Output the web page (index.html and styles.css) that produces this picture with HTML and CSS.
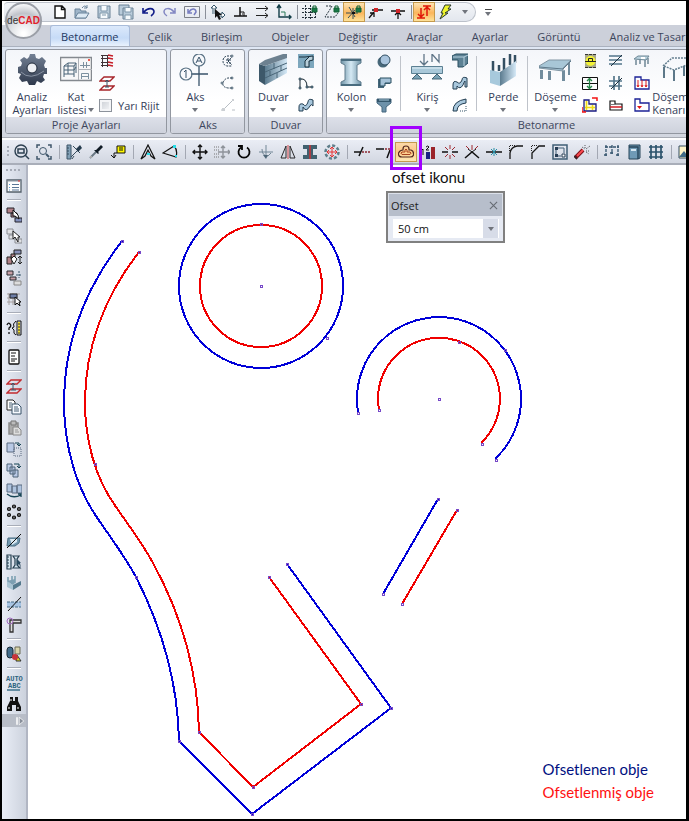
FILE: index.html
```html
<!DOCTYPE html>
<html lang="tr">
<head>
<meta charset="utf-8">
<title>ideCAD</title>
<link rel="stylesheet" href="styles.css">
</head>
<body>
<div class="app">
<header class="head">
  <button class="orb" aria-label="ideCAD"><span class="orb-i">de</span><b>CAD</b></button>
  <div class="quick">
    <div class="quick-bar">
      <button class="tool"><svg viewBox="0 0 16 16"><path d="M3 2H10L13 5V14H3ZM9.500 2V5.500H13" fill="#fff" stroke="#111" stroke-width="1.400"/></svg></button>
      <button class="tool"><svg viewBox="0 0 16 16"><path d="M1 14V5H6L7 7H12V14Z" fill="#9fb5c9" stroke="#688299"/><path d="M1 14L4 9H15L12 14Z" fill="#dce9f4" stroke="#688299"/><path d="M8 4Q11 0 13 4M13 1V4H10" stroke="#688299"/></svg></button>
      <button class="tool"><svg viewBox="0 0 16 16"><path d="M2 2H14V14H2Z" fill="#b9cbda" stroke="#6a8296"/><path d="M5 2V7H11V2M4 14V9H12V14M6 11H10" fill="#f6fafd" stroke="#7e97aa"/></svg></button>
      <button class="tool"><svg viewBox="0 0 16 16"><path d="M1 1H11V11H1Z" fill="#b9cbda" stroke="#6a8296"/><path d="M5 4H15V15H5Z" fill="#b9cbda" stroke="#6a8296"/><path d="M7 4V8H13V4M7 15V11H13V15" fill="#f6fafd" stroke="#7e97aa"/></svg></button>
      <button class="tool"><svg viewBox="0 0 16 16"><path d="M3 4V9H8M4 8C8 3 14 4 14 8Q14 10 11 12" stroke="#101c88" stroke-width="1.600"/></svg></button>
      <button class="tool"><svg viewBox="0 0 16 16"><path d="M13 4V9H8M12 8C8 3 2 4 2 8Q2 10 5 12" stroke="#8186c2" stroke-width="1.500"/></svg></button>
      <button class="tool"><svg viewBox="0 0 16 16"><path d="M.5 2.500H15.500V13.500H.5Z" stroke="#7c8088"/><path d="M4 5V9H8M5 8C8 3 12 5 12 8L10 11" stroke="#777dc0" stroke-width="1.500"/></svg></button>
      <i class="qsep"></i>
      <button class="tool"><svg viewBox="0 0 16 16"><path d="M3 10V4H1L4 1L7 4H5V10M8 12H12V14L15 11L12 8V10H9" fill="#fff" stroke="#37566a"/><path d="M5 5V14L7 12L9 16L11 15L9 11H12Z" fill="#111"/></svg></button>
      <button class="tool"><svg viewBox="0 0 16 16"><path d="M2 12H15M8 3V12" stroke="#111" stroke-width="1.500"/><path d="M8 8H12V12M10 10H11" stroke="#111"/></svg></button>
      <button class="tool"><svg viewBox="0 0 16 16"><path d="M2 4.500H14M11 2L14 4.500L11 7M2 11.500H14M11 9L14 11.500L11 14" stroke="#222"/></svg></button>
      <button class="tool"><svg viewBox="0 0 16 16"><path d="M3 2V13H15M1 4L3 1L5 4M13 11L15 13L13 15" stroke="#123d47" stroke-width="1.400"/><path d="M5 8H9V12" stroke="#287b59"/></svg></button>
      <i class="qsep"></i>
      <button class="tool"><svg viewBox="0 0 16 16"><path d="M3.500 1V15M8.500 1V15M13.500 9V15M0 4.500H9M0 8.500H15M0 13.500H15" stroke="#26333d" stroke-dasharray="2 1"/><path d="M10 4H15V8H10Z" fill="#197846" stroke="#126334"/><path d="M11 4V2H14V4" stroke="#126334"/></svg></button>
      <button class="tool"><svg viewBox="0 0 16 16"><path d="M2 2H8L5 7L1 13H11L14 9" stroke="#26333d" stroke-dasharray="2 1"/><path d="M10 4H15V8H10Z" fill="#197846" stroke="#126334"/><path d="M11 4V2H14V4" stroke="#126334"/></svg></button>
      <button class="tool lit"><svg viewBox="0 0 16 16"><path d="M0 9H12M3 3L9 13M2 14L9 6M7 4V15" stroke="#36515c"/><path d="M6 8H9V10H6Z" fill="#111"/><path d="M10 4H15V8H10Z" fill="#197846" stroke="#126334"/><path d="M11 4V2H14V4" stroke="#126334"/></svg></button>
      <button class="tool"><svg viewBox="0 0 16 16"><path d="M1 14L6 8M2 9H6V13M4 6H15" stroke="#111" stroke-width="1.300"/><path d="M6 4H10V8H6Z" fill="#d22429"/></svg></button>
      <button class="tool"><svg viewBox="0 0 16 16"><path d="M1 7H15M8 8V15M5 11L8 8L11 11" stroke="#111" stroke-width="1.300"/><path d="M6 5H10V9H6Z" fill="#d22429"/></svg></button>
      <i class="qsep"></i>
      <button class="tool lit"><svg viewBox="0 0 16 16"><path d="M5 4V13M1 14H9M2 10L5 13L8 10M11 3V12M7 2H15M8 6L11 3L14 6" stroke="#e01809" stroke-width="1.500"/></svg></button>
      <button class="tool"><svg viewBox="0 0 16 16"><path d="M7 1H13L10 5H13L7 9H10L2 15L5 9H3Z" fill="#eff42b" stroke="#26372a"/></svg></button>
      <button class="tool narrow" aria-label="Listeyi aç"><i class="tri"></i></button>
    </div>
    <button class="tool narrow more" aria-label="Özelleştir"><i class="bar"></i><i class="tri"></i></button>
  </div>
  <nav class="tabs">
    <a class="tab on" href="#">Betonarme</a><a class="tab" href="#">Çelik</a><a class="tab" href="#">Birleşim</a><a class="tab" href="#">Objeler</a><a class="tab" href="#">Değiştir</a><a class="tab" href="#">Araçlar</a><a class="tab" href="#">Ayarlar</a><a class="tab" href="#">Görüntü</a><a class="tab" href="#">Analiz ve Tasarım</a>
  </nav>
</header>

<section class="ribbon">
  <div class="group">
    <div class="group-body">
      <button class="big wide"><svg viewBox="0 0 32 32"><defs><linearGradient id="steel" x2="0" y2="1"><stop stop-color="#738094"/><stop offset="1" stop-color="#2f394c"/></linearGradient></defs><path d="M13 3L14 0H19L20 4L23 5L26 3L30 7L28 11L29 14H31V20H28L27 23L29 26L25 29L21 27L19 31H13L11 27L6 28L3 24L5 20L2 19V13L5 12L6 9L4 6L8 3L11 5Z" fill="url(#steel)"/><ellipse cx="16" cy="14" rx="5" ry="5" fill="#eef0f4" stroke="#1f2939"/><path d="M5 18Q14 27 28 17" stroke="#8993a3"/></svg><span>Analiz<br>Ayarları</span></button>
      <button class="big slim"><svg viewBox="0 0 32 32"><path d="M.5 3.500H31.500V26.500H.5Z" fill="#f7f7f8" stroke="#84898f" stroke-width="1.500"/><path d="M18.500 4V26M19 15.500H32" stroke="#aeb2b8"/><path d="M28 5H30V7H28Z" fill="#ef5c50"/><path d="M4 12L8 9H16V19M4 12H14V23M4 12V23M8 9V20M4 16H14L16 13M14 12L16 9M4 20H14" stroke="#496376"/><path d="M20 11.500H30M23.500 8V14M26.500 8V14M21.500 25V19.500H28.500V25M22 22.500H28" stroke="#7c909f"/></svg><span>Kat<br>listesi<i class="tri"></i></span></button>
      <div class="stack left">
        <button class="small"><svg viewBox="0 0 16 16"><path d="M2 2.500H13M2 5.500H13M2 9.500H13M2 12.500H13M3.500 2V14M8.500 2V14" stroke="#3f3438"/><path d="M9 2L14 3M9 5L14 6M9 9L14 10M9 12L14 13" stroke="#c61d27" stroke-width="1.500"/></svg></button>
        <button class="small"><svg viewBox="0 0 16 16"><path d="M5 2H15L11 6H1ZM5 11H15L11 15H1Z" stroke="#a6242a" stroke-width="1.300"/><path d="M8 5V12M6 7L8 5L10 7M6 12H10" stroke="#385569"/></svg></button>
        <label class="check"><input type="checkbox">Yarı Rijit</label>
      </div>
    </div>
    <h2>Proje Ayarları</h2>
  </div>

  <div class="group">
    <div class="group-body">
      <button class="big"><svg viewBox="0 0 32 32"><path d="M20 12V32M12 20H29" stroke="#38536a" stroke-width="1.300"/><circle cx="20" cy="6" r="6" stroke="#5b7386" stroke-width="1.200"/><circle cx="7" cy="20" r="6" stroke="#5b7386" stroke-width="1.200"/><path d="M17 9L20 3L23 9M18 7H22M5 18L7 16V24" stroke="#38536a"/></svg><span>Aks<i class="tri under"></i></span></button>
      <div class="stack">
        <button class="small"><svg viewBox="0 0 16 16"><path d="M12 3H7Q3 4 3 8T7 13H12M8 8L12 4M8 8L12 12M7 6H10V10H7Z" stroke="#263d50" stroke-dasharray="2 1"/><circle cx="12" cy="3" r="1" fill="#fff" stroke="#496172"/></svg></button>
        <button class="small"><svg viewBox="0 0 16 16"><path d="M12 3H8Q4 4 3 8T8 13H12" stroke="#263d50" stroke-dasharray="2 1"/><circle cx="12" cy="3" r="1" stroke="#496172"/><circle cx="2" cy="8" r="1" stroke="#496172"/><circle cx="12" cy="13" r="1" stroke="#496172"/></svg></button>
        <button class="small"><svg viewBox="0 0 16 16"><path d="M3 13L13 3M1 13H4M12 13H15" stroke="#b8bec4"/><path d="M2 11H5V14H2ZM12 2H14V4H12Z" fill="#ccd0d4"/></svg></button>
      </div>
    </div>
    <h2>Aks</h2>
  </div>

  <div class="group">
    <div class="group-body">
      <button class="big"><svg viewBox="0 0 32 32"><defs><linearGradient id="glass" x2="1"><stop stop-color="#5b7b8f"/><stop offset="1" stop-color="#d5e9f7"/></linearGradient></defs><path d="M2 10L8 12V31L2 27Z" fill="#3d586a"/><path d="M8 12L30 4V19L8 31Z" fill="url(#glass)"/><path d="M2 10L8 6L26 0H30V4L8 12Z" fill="#6d8190"/><path d="M8 18L30 9M8 24L30 14M17 9V15M24 12V17M13 17V22M20 19V24" stroke="#496577"/></svg><span>Duvar<i class="tri under"></i></span></button>
      <div class="stack">
        <button class="small"><svg viewBox="0 0 16 16"><path d="M0 1H16V15H0Z" fill="#7da7bd"/><path d="M1 4H7L15 3V7L11 8V14H7V8L11 4" fill="#b7ced9" stroke="#172e3c"/></svg></button>
        <button class="small"><svg viewBox="0 0 16 16"><path d="M2 13V4Q9 3 9 12H15" stroke="#16252f"/><path d="M1 12H3V14H1ZM1 3H3V5H1ZM8 11H10V13H8ZM13 11H15V13H13Z" fill="#6d8c9f" stroke="#273d4c" stroke-width=".6"/></svg></button>
        <button class="small"><svg viewBox="0 0 16 16"><path d="M1 10Q1 6 5 7Q8 11 10 5Q10 1 15 3V9Q13 6 12 9Q8 16 5 10V14H1Z" fill="#a8c7dc" stroke="#233e52"/></svg></button>
      </div>
    </div>
    <h2>Duvar</h2>
  </div>

  <div class="group last">
    <div class="group-body">
      <button class="big"><svg viewBox="0 0 32 32"><defs><linearGradient id="pillar" x2="1"><stop stop-color="#6f93a6"/><stop offset=".5" stop-color="#d5e9f4"/><stop offset="1" stop-color="#6f93a6"/></linearGradient></defs><path d="M6 5H26V9L22 11V26L26 28V32H6V28L10 26V11L6 9Z" fill="url(#pillar)" stroke="#607d8e"/><path d="M6 5H26V7H6ZM6 30H26V32H6Z" fill="#496c7f"/></svg><span>Kolon<i class="tri under"></i></span></button>
      <div class="stack">
        <button class="small"><svg viewBox="0 0 16 16"><circle cx="7" cy="9" r="5.500" fill="#48687a"/><circle cx="9" cy="7" r="5" fill="#a9c4dd" stroke="#314e61"/></svg></button>
        <button class="small"><svg viewBox="0 0 16 16"><path d="M2 4H14V9H8V13H2Z" fill="#45677b"/><path d="M4 3H15V8H9V11H4Z" fill="#a5c2d8" stroke="#294e61"/></svg></button>
        <button class="small"><svg viewBox="0 0 16 16"><path d="M1 2H15V6L10 10V15H6V10L1 6Z" fill="#6d91a9" stroke="#45677e"/><path d="M1 2H15V5H1Z" fill="#34566b"/><path d="M3 3H13" stroke="#a7c8db"/></svg></button>
      </div>
      <i class="gsep"></i>
      <button class="big"><svg viewBox="0 0 32 32"><path d="M.5 12.500H31.500V19.500H.5Z" fill="#a9c8d9" stroke="#5c8093"/><path d="M1 14H31" stroke="#e4f1f7"/><path d="M6 20L11 25H1ZM26 20L31 25H21Z" fill="#79a2b5" stroke="#446576"/><path d="M13 0V11M9 7L13 11L17 7M21 8V0L28 8V0" stroke="#607688" stroke-width="1.300"/></svg><span>Kiriş<i class="tri under"></i></span></button>
      <div class="stack">
        <button class="small"><svg viewBox="0 0 16 16"><path d="M0 3L4 1H16V10L11 14H6V7H0Z" fill="#5c8194" stroke="#294e61"/><path d="M1 4H12V13M12 4L16 2" stroke="#b7d1df"/></svg></button>
        <button class="small"><svg viewBox="0 0 16 16"><path d="M1 10Q1 5 5 7Q8 10 10 5Q10 1 15 3V12L13 12V6Q12 7 11 10Q8 15 5 11V14H1Z" fill="#a8c7dc" stroke="#233e52"/></svg></button>
        <button class="small"><svg viewBox="0 0 16 16"><path d="M1 14Q1 4 14 2V6Q5 7 5 14Z" fill="#a8c7dc" stroke="#233e52"/><path d="M8 14H14V8" stroke="#38566a" stroke-dasharray="1 1"/></svg></button>
      </div>
      <i class="gsep"></i>
      <button class="big"><svg viewBox="0 0 32 32"><path d="M6 18V7M12 17V11M17 16V4M23 11V0M28 9V1" stroke="#344f62" stroke-width="2.500"/><path d="M13 18L29 7V22L13 32Z" fill="url(#glass)"/><path d="M3 16L13 18V32L3 29Z" fill="#a7c9dc"/></svg><span>Perde<i class="tri under"></i></span></button>
      <i class="gsep near"></i>
      <button class="big wide"><svg viewBox="0 0 32 32"><path d="M1 16V25H4V16M23 17V27H26V16M29 10V21H31V7M9 17V26H12V17" fill="#718c9d"/><path d="M0 12L10 6H32L24 14V17L0 14Z" fill="#a8c7d7" stroke="#8095a3"/><path d="M0 13L24 15L32 7" stroke="#5e798a"/></svg><span>Döşeme<i class="tri under"></i></span></button>
      <div class="stack">
        <button class="small"><svg viewBox="0 0 16 16"><path d="M3 1H14V15H3Z" fill="#a9a98a"/><circle cx="8.500" cy="8" r="5" fill="#f3f336"/><path d="M3 8.500H14M6.500 8V5.500H10.500V8" stroke="#222"/><path d="M3 1.500H14M3 14.500H14" stroke="#343434" stroke-dasharray="3 1"/></svg></button>
        <button class="small"><svg viewBox="0 0 16 16"><path d="M.5 2.500H15.500V14.500H.5ZM1 8.500H15" stroke="#111"/><path d="M7.500 4V13M5 6L7.500 3.500L10 6M5 11L7.500 13.500L10 11" stroke="#248546" stroke-width="1.300"/></svg></button>
        <button class="small"><svg viewBox="0 0 16 16"><path d="M2 3H7V7H14V14H2Z" fill="#fffce0" stroke="#181b83" stroke-width="1.300"/><path d="M4.500 4V13M10.500 8V13M3 10.500H13" stroke="#eddc15" stroke-width="1.500"/><path d="M10 1H15V4M0 10V15H4" stroke="#f31313" stroke-width="1.500"/></svg></button>
      </div>
      <div class="stack spaced">
        <button class="small"><svg viewBox="0 0 16 16"><path d="M1 3H14M1 7H14M1 11H14" stroke="#53758a" stroke-width="1.700"/><path d="M3 13L14 2" stroke="#1b303f"/></svg></button>
        <button class="small"><svg viewBox="0 0 16 16"><path d="M1 6H14M1 11H14M6 1V15M11 1V15" stroke="#53758a" stroke-width="1.700"/><path d="M3 14L14 3" stroke="#1b303f"/></svg></button>
        <button class="small"><svg viewBox="0 0 16 16"><path d="M2 4H7V7H14V13H2Z" stroke="#111" stroke-width="1.200"/><path d="M2 10H14" stroke="#d31c25" stroke-width="1.500"/><path d="M2 7.500H8" stroke="#777"/></svg></button>
      </div>
      <div class="stack spaced">
        <button class="small"><svg viewBox="0 0 16 16"><path d="M0 6L4 3H15L12 7Z" fill="#b9d1dd" stroke="#6c8796"/><path d="M2 7V12M11 7V14M14 5V11M6 7V11" stroke="#6f8796" stroke-width="1.500"/><path d="M7 4H11V6H7Z" fill="#fff"/></svg></button>
        <button class="small"><svg viewBox="0 0 16 16"><path d="M1 2H7V5H15V14H1Z" stroke="#1c2296" stroke-width="1.300"/><path d="M4 5V12M8 5V12M12 5V12M3 10L4 12L5 10M7 10L8 12L9 10M11 10L12 12L13 10" stroke="#df1e20"/></svg></button>
        <button class="small"><svg viewBox="0 0 16 16"><path d="M1 2H6V6H15V14H1Z" stroke="#1c2296" stroke-width="1.300"/><path d="M3 9H8L5.500 12Z" fill="#e11313"/></svg></button>
      </div>
      <button class="big"><svg viewBox="0 0 32 32"><path d="M6 12L15 4H32M7 12L17 16L32 10" stroke="#647f90" stroke-width="1.500" stroke-dasharray="2 1"/><path d="M7 13V24M17 16V27M27 12V22" stroke="#5d7889" stroke-width="2"/></svg><span class="from-left">Döşeme<br>Kenarı</span></button>
    </div>
    <h2>Betonarme</h2>
  </div>
</section>

<div class="toolbar">
  <i class="grip"></i>
  <button class="tool"><svg viewBox="0 0 16 16"><circle cx="7" cy="7" r="6" stroke="#2d4051" stroke-width="1.400"/><path d="M4 5H10V9H4ZM11 11L15 15" stroke="#2d4051" stroke-width="1.500"/></svg></button>
  <button class="tool"><svg viewBox="0 0 16 16"><path d="M1 4V1H4M12 1H15V4M15 12V15H12M4 15H1V12" stroke="#40576b" stroke-width="1.500"/><circle cx="7" cy="7" r="3.500" stroke="#40576b"/><path d="M10 10L13 13" stroke="#40576b" stroke-width="2"/></svg></button>
  <i class="sep"></i>
  <button class="tool"><svg viewBox="0 0 16 16"><path d="M1 1H5V15H1Z" fill="#81a0b6" stroke="#3d5569"/><path d="M1 4H3M1 7H3M1 10H3M5 13L11 7M7 2L14 9M6 15L8 12" stroke="#374c5e"/><path d="M10 5L14 1L16 4L12 8Z" fill="#243a4d"/></svg></button>
  <button class="tool"><svg viewBox="0 0 16 16"><path d="M2 14L9 7" stroke="#697883" stroke-width="2"/><path d="M8 6L13 1L15 3L10 8L11 9L10 10L6 6Z" fill="#111b25"/><path d="M2 12H4V14H2Z" fill="#aaa"/></svg></button>
  <button class="tool"><svg viewBox="0 0 16 16"><path d="M7 2H15V9H7Z" fill="#fff800" stroke="#111"/><path d="M9 4H13M9 6H13M7 9H4V14M1 11L4 14L6 11" stroke="#111"/></svg></button>
  <i class="sep"></i>
  <button class="tool"><svg viewBox="0 0 16 16"><path d="M8 1L1 15L5 12L8 6L11 12L15 15Z" stroke="#111" stroke-width="1.200"/><path d="M7 9H10V11H7Z" fill="#25dbe7"/></svg></button>
  <button class="tool"><svg viewBox="0 0 16 16"><path d="M1 9L12 2Q16 6 14 13Z" stroke="#111" stroke-width="1.200"/><path d="M11 1H14V4H11ZM13 11H15V13H13Z" fill="#25dbe7"/></svg></button>
  <i class="sep"></i>
  <button class="tool"><svg viewBox="0 0 16 16"><path d="M8 1V15M1 8H15M6 3L8 1L10 3M6 13L8 15L10 13M3 6L1 8L3 10M13 6L15 8L13 10" stroke="#111" stroke-width="1.400"/></svg></button>
  <button class="tool"><svg viewBox="0 0 16 16"><path d="M9 2V14M4 8H16M7 4L9 2L11 4M7 12L9 14L11 12M14 6L16 8L14 10" stroke="#8e939a" stroke-width="1.400"/><path d="M0 3H6M0 6H5M0 10H5M0 13H6" stroke="#777" stroke-dasharray="1 1"/></svg></button>
  <button class="tool"><svg viewBox="0 0 16 16"><path d="M11 3.500A5.500 5.500 0 1 1 5 3.500M2 2H6V6" stroke="#050505" stroke-width="1.800"/></svg></button>
  <button class="tool"><svg viewBox="0 0 16 16"><path d="M1 8H15M8 1V13M4 5Q4 12 10 12L13 9" stroke="#738796"/><path d="M5 11L8 15L10 11Z" fill="#4f6778"/></svg></button>
  <button class="tool"><svg viewBox="0 0 16 16"><path d="M1 14L6 2V14ZM15 14L10 2V14Z" stroke="#29282b"/><path d="M8 1V15" stroke="#d44548"/></svg></button>
  <button class="tool"><svg viewBox="0 0 16 16"><path d="M1 1H15V5H11V11H15V15H1V11H5V5H1Z" fill="#41616f"/><path d="M8 1V15" stroke="#ef2525" stroke-width="1.200"/></svg></button>
  <button class="tool"><svg viewBox="0 0 16 16"><circle cx="8" cy="8" r="6.500" stroke="#5f7f8b" stroke-width="2.500" stroke-dasharray="3 2"/><path d="M8 3V13M3 8H13M6 5L8 3L10 5M6 11L8 13L10 11M5 6L3 8L5 10M11 6L13 8L11 10" stroke="#e63434"/></svg></button>
  <i class="sep"></i>
  <button class="tool"><svg viewBox="0 0 16 16"><path d="M0 8H7M5 12L9 3" stroke="#111" stroke-width="1.500"/><path d="M8 8H16" stroke="#8b2932" stroke-dasharray="2 1" stroke-width="1.500"/></svg></button>
  <button class="tool"><svg viewBox="0 0 16 16"><path d="M0 5H8M11 14L14 6" stroke="#111" stroke-width="1.500"/><path d="M9 5H15" stroke="#8b2932" stroke-dasharray="2 1" stroke-width="1.500"/></svg></button>
  <button class="tool lit marked" aria-label="Ofset"><svg viewBox="0 0 16 16"><path d="M5 6V5Q5 2 8 2T11 5V6H13Q16 7 15.500 11Q15 13 12 13H4Q0 13 .5 9Q2 6 5 6Z" stroke="#542a20" stroke-width="1.200"/><path d="M7 8V6Q8 4 9 6V8H12Q14 9 12 10.500H4Q2 9 4 8Z" stroke="#a84220"/></svg></button>
  <button class="tool"><svg viewBox="0 0 16 16"><path d="M6 8H10V15H6Z" fill="#192282"/><path d="M11 3H15V15H11Z" fill="#9b242a"/><path d="M2 6L3 5V11M6 3Q8 1 9 3L6 6H9" stroke="#111"/></svg></button>
  <button class="tool"><svg viewBox="0 0 16 16"><path d="M0 8H6M10 8H16" stroke="#111" stroke-width="1.600"/><path d="M8 1V5M8 11V15M3 3L6 6M13 3L10 6M3 13L6 10M13 13L10 10" stroke="#a22a31"/></svg></button>
  <button class="tool"><svg viewBox="0 0 16 16"><path d="M1 14L8 8L15 14" stroke="#111" stroke-width="1.500"/><path d="M4 5L8 8L12 5" stroke="#111"/><path d="M8 1V6M2 2L5 5M14 2L11 5" stroke="#a22a31"/></svg></button>
  <button class="tool"><svg viewBox="0 0 16 16"><path d="M0 8H16" stroke="#111" stroke-width="1.500"/><path d="M5 5L11 11M11 5L5 11M8 4V12" stroke="#268ea5"/></svg></button>
  <button class="tool"><svg viewBox="0 0 16 16"><path d="M2 15V9Q3 3 9 2H15" stroke="#151515" stroke-width="1.300"/><path d="M1.500 7V1.500H8" stroke="#222" stroke-dasharray="1 1"/></svg></button>
  <button class="tool"><svg viewBox="0 0 16 16"><path d="M2 15V9L9 2H15" stroke="#151515" stroke-width="1.300"/><path d="M1.500 7V1.500H8" stroke="#222" stroke-dasharray="1 1"/></svg></button>
  <button class="tool"><svg viewBox="0 0 16 16"><path d="M1 1H15V15H1Z" stroke="#405f76" stroke-width="1.500"/><path d="M4 4H12V9M4 4V12H9" stroke="#405f76"/><path d="M3 3H6V6H3ZM3 10H6V13H3Z" fill="#283e55"/><path d="M10 10H13V13H10Z" fill="#fff" stroke="#283e55"/></svg></button>
  <button class="tool"><svg viewBox="0 0 16 16"><path d="M1 14L9 6" stroke="#7a1118" stroke-width="4"/><path d="M3 12L9 6" stroke="#fb4a50" stroke-width="2"/><path d="M0 12L3 15" stroke="#29272a" stroke-width="1.500"/><path d="M11 1V4M8 3L11 5M12 5L16 2M12 7H16M12 8L15 10" stroke="#55575a" stroke-dasharray="1 1"/></svg></button>
  <i class="sep"></i>
  <button class="tool"><svg viewBox="0 0 16 16"><path d="M1 3H15M2 1V12M8 1V7M14 1V12M0 11H4M12 11H16M6 9H10M8 7V11" stroke="#36566f" stroke-width="1.300" stroke-dasharray="3 1"/></svg></button>
  <button class="tool"><svg viewBox="0 0 16 16"><path d="M3 1H14V14L12 15H3Z" fill="#6f9ab6" stroke="#264459"/><path d="M3 3H12V15" stroke="#264459" stroke-width="1.400"/><path d="M5 5H10V7H5Z" fill="#d7e8f3"/></svg></button>
  <button class="tool"><svg viewBox="0 0 16 16"><path d="M3 1V15M8 1V15M13 1V15M1 3H15M1 8H15M1 13H15" stroke="#2c536c" stroke-width="1.700"/></svg></button>
  <i class="sep"></i>
  <button class="tool"><svg viewBox="0 0 16 16"><path d="M1 2H15V14H1Z" fill="#fff4c7" stroke="#344f62"/><path d="M1 13L6 7L11 13Z" fill="#3f6a86"/></svg></button>
</div>

<main class="work">
  <aside class="side">
    <i class="grip flat"></i>
    <button class="tool"><svg viewBox="0 0 16 16"><path d="M1 2H15V14H1Z" fill="#fff" stroke="#54606b" stroke-width="1.300"/><path d="M1 3H15" stroke="#8995a1"/><path d="M6 6.500H13M6 9.500H13M6 12H13" stroke="#5a7797"/><path d="M3 6.500H4M3 9.500H4M3 12H4" stroke="#5a9ad7"/><path d="M12 3H14" stroke="#e33"/></svg></button>
    <i class="sep"></i>
    <button class="tool"><svg viewBox="0 0 16 16"><path d="M1 1H8V6H1ZM5 6H11V10H5Z" fill="#b18086" stroke="#26252c"/><path d="M9 11H16V15H9Z" fill="#8290bd" stroke="#26252c"/><path d="M7 3L12 8L13 12L9 9H7Z" fill="#fff" stroke="#111"/></svg></button>
    <button class="tool"><svg viewBox="0 0 16 16"><path d="M1 1H7V6H1ZM3 7H9V11H3ZM9 11H16V15H9Z" fill="#e0e1e4" stroke="#898c92"/><path d="M7 3V11L9 9L12 14V9H14Z" fill="#fff" stroke="#222"/></svg></button>
    <button class="tool"><svg viewBox="0 0 16 16"><path d="M8 1H15V5H8Z" fill="#8891ba" stroke="#222"/><path d="M1 8H6V15H1ZM5 5H9V10H5Z" fill="#b18086" stroke="#222"/><path d="M8 7L11 10L8 15L5 10Z" fill="#fff" stroke="#222"/><path d="M14 7V15M12 9L14 7L16 9M12 13L14 15L16 13" stroke="#222"/></svg></button>
    <button class="tool"><svg viewBox="0 0 16 16"><path d="M1 1H7V5H1ZM4 7H10V10H4Z" fill="#c69fa5" stroke="#292b30"/><path d="M8 11H15V15H8Z" fill="#ddd" stroke="#888"/><path d="M13 1V8M10 5H16" stroke="#37566a" stroke-dasharray="2 1"/></svg></button>
    <button class="tool"><svg viewBox="0 0 16 16"><path d="M1 3H14M1 7H12M1 11H12M3 2V14M7 2V14M11 2V14" stroke="#a59f9e"/><path d="M4 3H11V7H4Z" fill="#6d7da6" stroke="#25272b"/><path d="M9 6V14L11 12L14 15L13 11H15Z" fill="#fff" stroke="#111"/></svg></button>
    <i class="sep"></i>
    <button class="tool"><svg viewBox="0 0 16 16"><path d="M1 5Q2 2 4 4Q6 6 3 8V10M3 12V14" stroke="#111" stroke-width="1.300"/><path d="M10 1Q6 4 8 7L6 8L8 10Q7 14 10 15M11 1H15V15H11Z" stroke="#111"/><path d="M12 2H14V14H12Z" fill="#f4de31"/><path d="M12 4H14M12 7H14M12 10H14M12 13H14" stroke="#333"/></svg></button>
    <i class="sep"></i>
    <button class="tool"><svg viewBox="0 0 16 16"><rect x="3" y="1" width="10" height="14" rx="1" fill="#fff" stroke="#111" stroke-width="1.300"/><path d="M5 4H10M5 7H9M5 10H11M5 12H9" stroke="#111"/></svg></button>
    <i class="sep"></i>
    <button class="tool"><svg viewBox="0 0 16 16"><path d="M5 2H15L11 6H1ZM5 11H15L11 15H1Z" stroke="#c22b2f" stroke-width="1.300"/><path d="M7 5V12M5 7L7 5L9 7M5 12H10" stroke="#385569"/></svg></button>
    <button class="tool"><svg viewBox="0 0 16 16"><path d="M1 1H7L9 3V11H1Z" fill="#fff" stroke="#222"/><path d="M6 5H12L15 8V15H6Z" fill="#f7faff" stroke="#385269"/><path d="M3 4H6M3 6H5M3 8H5M8 8H12M8 10H13M8 12H13" stroke="#486175"/></svg></button>
    <button class="tool"><svg viewBox="0 0 16 16"><path d="M3 3H12V14H3Z" fill="#aaa" stroke="#8b8b8b" stroke-width="1.500"/><path d="M5 1H10V5H5Z" fill="#bbb" stroke="#777"/><path d="M7 7H12L15 10V15H7Z" fill="#ddd" stroke="#888"/><path d="M9 10H12M9 12H13" stroke="#999"/></svg></button>
    <button class="tool"><svg viewBox="0 0 16 16"><path d="M1 2H8V11H1Z" fill="#b9c9e5" stroke="#5a6b80"/><path d="M8 7H15V15H8Z" stroke="#5a6b80" stroke-dasharray="1 1"/><path d="M9 2H13V5M11 3L13 5L15 3" stroke="#174455"/></svg></button>
    <button class="tool"><svg viewBox="0 0 16 16"><path d="M1 2H6V9H1ZM4 5H9V12H4ZM7 8H12V15H7Z" fill="#b9c9e5" stroke="#4d6276"/><path d="M8 2H13V6M11 4L13 6L15 4" stroke="#174455"/></svg></button>
    <button class="tool"><svg viewBox="0 0 16 16"><path d="M1 1H6V9H1ZM6 3H11V10H6ZM11 2H16V10H11Z" fill="#afc4df" stroke="#5a6b80"/><path d="M1 11Q7 16 15 12M12 11H15V14" stroke="#174455" stroke-width="1.300"/></svg></button>
    <button class="tool"><svg viewBox="0 0 16 16"><g fill="#777" stroke="#111" stroke-width="1.200"><circle cx="8" cy="2.500" r="1.500"/><circle cx="3" cy="5" r="1.500"/><circle cx="13" cy="5" r="1.500"/><circle cx="3" cy="11" r="1.500"/><circle cx="13" cy="11" r="1.500"/><circle cx="8" cy="13.500" r="1.500"/></g></svg></button>
    <i class="sep"></i>
    <button class="tool"><svg viewBox="0 0 16 16"><path d="M2 5H14L13 10L9 13H1Z" fill="#7298b0" stroke="#486c81"/><path d="M4 6H11V9L6 12" fill="#d8e8f2"/><path d="M1 15L15 1" stroke="#111"/></svg></button>
    <button class="tool"><svg viewBox="0 0 16 16"><path d="M1 1H5V15H1ZM7 2H13L11 5V11L14 14H7L9 11V5Z" fill="#d4e5ef" stroke="#263f50" stroke-width="1.200"/><path d="M1 3H3M1 6H3M1 9H3M1 12H3" stroke="#263f50"/><path d="M11 5V12L13 10L15 14L14 9H15Z" fill="#2b4b60"/></svg></button>
    <button class="tool"><svg viewBox="0 0 16 16"><path d="M2 2V9M6 1V9M9 1V8" stroke="#8fadbd" stroke-width="2"/><path d="M1 6L7 10V15L1 12Z" fill="#a9c4d3"/><path d="M7 10L15 6V10L7 15Z" fill="#54798d"/><path d="M1 6L9 4V8L7 10Z" fill="#7c9fb2"/></svg></button>
    <button class="tool"><svg viewBox="0 0 16 16"><path d="M1 6H15V11H1Z" fill="#a8c4e3"/><path d="M1 6H15M1 11H15" stroke="#476d87" stroke-dasharray="3 1"/><path d="M2 15L15 1" stroke="#111"/></svg></button>
    <button class="tool"><svg viewBox="0 0 16 16"><path d="M4 3H15V6H7V15H4Z" fill="#dedede" stroke="#333" stroke-width="1.300"/><circle cx="4" cy="4" r="3" stroke="#a36cc2"/></svg></button>
    <i class="sep"></i>
    <button class="tool"><svg viewBox="0 0 16 16"><rect x="1" y="1" width="6" height="11" rx="3" fill="#436d8c" stroke="#1b2d39"/><path d="M9 1H14V8H9Z" fill="#d8d4aa" stroke="#6b6a55"/><path d="M11 9L15 15H10Z" fill="#ddcf22" stroke="#333"/><circle cx="9" cy="11" r="3" fill="#c7343a"/></svg></button>
    <i class="sep"></i>
    <button class="tool"><svg viewBox="0 0 16 16" class="words"><text x="0" y="6">AUTO</text><text x="2" y="13">ABC</text><path d="M1 15H14" stroke="#3d718b" stroke-width="1.500"/></svg></button>
    <button class="tool"><svg viewBox="0 0 16 16"><path d="M4 1H7V5H9V1H12V5L15 11V15H10V9H6V15H1V11L4 5Z" fill="#111"/><path d="M3 11V13M12 11V13M5 3V5" stroke="#fff"/></svg></button>
    <button class="side-more" aria-label="Diğer"><svg viewBox="0 0 16 16"><path d="M4 3V13" stroke="#fff" stroke-width="2"/><path d="M7 3L13 8L7 13Z" fill="#888f9a" stroke="#fff"/></svg></button>
  </aside>
  <section class="canvas">
    <svg class="drawing" viewBox="28 165 658 654" preserveAspectRatio="xMinYMin meet">
      <g class="blue">
        <circle cx="261" cy="286" r="82"/>
        <path d="M358 412A82 82 0 1 1 495 459"/>
        <path d="M438 499L383 594"/>
        <path d="M122 241C84 290 64 345 64 402C64 448 77 489 98 519C113 541 124 555 136 577C162 628 178 684 179 741L252 814L391 708L287 564"/>
      </g>
      <g class="red">
        <circle cx="261" cy="286" r="61"/>
        <path d="M379 410A61 61 0 1 1 481 443"/>
        <path d="M457 510L402 604"/>
        <path d="M139 252C103 298 85 350 85 402C85 440 95 478 116 507C129 526 141 541 153 563C182 616 198 673 199 732L253 787L361 704L269 577"/>
      </g>
      <g class="nodes">
        <path d="M260 285h2v2h-2zM438 398h2v2h-2zM260 223h2v2h-2zM326 337h2v2h-2zM458 341h2v2h-2zM504 349h2v2h-2zM357 412h2v2h-2zM378 409h2v2h-2zM495 459h2v2h-2zM481 443h2v2h-2zM437 498h2v2h-2zM382 593h2v2h-2zM456 509h2v2h-2zM401 603h2v2h-2zM121 240h2v2h-2zM138 251h2v2h-2zM94 463h2v2h-2zM135 576h2v2h-2zM178 740h2v2h-2zM198 731h2v2h-2zM251 813h2v2h-2zM252 786h2v2h-2zM390 707h2v2h-2zM360 703h2v2h-2zM286 563h2v2h-2zM268 576h2v2h-2z"/>
      </g>
    </svg>
    <p class="note">ofset ikonu</p>
    <form class="panel">
      <div class="panel-head"><label for="dist">Ofset</label><button type="button" aria-label="Kapat"><svg viewBox="0 0 10 10"><path d="M1 1L9 9M9 1L1 9" stroke="#666b73" stroke-width="1.200"/></svg></button></div>
      <div class="panel-body"><select id="dist"><option>50 cm</option></select><span class="drop"><i class="tri"></i></span></div>
    </form>
    <div class="legend"><p class="src">Ofsetlenen obje</p><p class="res">Ofsetlenmiş obje</p></div>
  </section>
</main>
</div>
</body>
</html>
```
FILE: styles.css
```css
*, *::after { box-sizing: border-box; }
body { margin: 0; font-family: "Open Sans", "Noto Sans", sans-serif; font-size: 11px; color: #333d58; }
button { padding: 0; border: 0; background: none; font: inherit; color: inherit; }
svg { fill: none; display: block; }
i { flex: none; }

.app { display: flex; flex-direction: column; min-height: 100vh; overflow: hidden; border: solid #000; border-width: 1px 3px 2px 2px; background: #d3d7e0; }

.head { position: relative; background: #fff; }
.quick { display: flex; height: 24px; padding: 1px 0 3px 2px; background: #fff; }
.quick-bar { display: flex; align-items: center; height: 20px; padding: 0 2px 0 45px; border: 1px solid #bcc1ca; border-left: 0; border-radius: 4px 10px 10px 0; background: linear-gradient(#f3f5f8, #e3e7ee); }
.tool { display: flex; flex: none; align-items: center; justify-content: center; width: 22px; height: 20px; }
.tool svg { width: 16px; height: 16px; flex: none; }
.tool.lit { border: 1px solid #c59a4d; background: linear-gradient(#fde3b4, #fbb65c 55%, #fde29a); }
.toolbar .lit { background: linear-gradient(#fbd9a8, #fcc987 50%, #fdeab8); }
.narrow { width: 16px; }
.more { flex-direction: column; gap: 2px; margin-left: 4px; }
.more .bar { width: 7px; height: 1px; background: #444; }
.qsep { width: 1px; height: 14px; margin: 0 1px 0 2px; background: #8a8f99; }
.tri { display: inline-block; width: 0; height: 0; border: 3px solid transparent; border-top: 4px solid #70747c; border-bottom: 0; }

.orb { position: absolute; left: 3px; top: 1px; z-index: 2; display: flex; align-items: center; justify-content: center; width: 37px; height: 37px; border: 2px solid #9b9fa7; border-radius: 50%; background: radial-gradient(circle at 50% 90%, #fff 5%, #d9dce1 45%, #c0c3ca 60%, #f4f5f7 85%); font-family: "Liberation Sans", sans-serif; font-size: 10px; color: #333; }
.orb b { color: #e0222a; }

.tabs { display: flex; height: 22px; padding-left: 48px; overflow: hidden; background: #ccd0da; border-bottom: 1px solid #aab1be; }
.tab { flex: none; padding: 3px 14px 0 15px; line-height: 18px; color: #3d465c; text-decoration: none; white-space: nowrap; }
.tab.on { margin-right: 3px; padding: 2px 10px 0; border: 1px solid #a9bcda; border-bottom: 0; border-radius: 3px 3px 0 0; background: linear-gradient(#dce9fb, #c6dbf7 60%, #e9f2fd); color: #253a62; }

.ribbon { display: flex; gap: 3px; padding: 2px 0 3px 3px; overflow: hidden; background: linear-gradient(#dfe7f4, #d2d6df); border-bottom: 1px solid #a7abb3; }
.group { flex: none; display: flex; flex-direction: column; border: 1px solid #9297a0; border-radius: 3px; overflow: hidden; background: linear-gradient(#f4f6fa, #fff 60%); }
.group-body { display: flex; height: 67px; padding: 0 7px 0 2px; }
.last .group-body { padding-right: 70px; }
.group h2 { margin: 0; height: 16px; line-height: 16px; font-size: 11px; font-weight: 400; text-align: center; color: #3d465c; background: linear-gradient(#dde0e9, #ced2dc); }
.big { display: flex; flex-direction: column; align-items: center; width: 44px; padding-top: 4px; line-height: 13px; white-space: nowrap; }
.big.wide { width: 48px; }
.big.slim { width: 40px; }
.big svg { flex: none; width: 32px; height: 32px; margin-bottom: 4px; }
.big span { display: block; }
.big .from-left { text-align: left; }
.big .tri { margin: 0 0 2px 2px; }
.big .tri.under { display: block; margin: 5px auto 0; }
.stack { display: flex; flex-direction: column; gap: 4px; padding-top: 2px; margin-left: 2px; }
.stack.spaced { margin-left: 8px; }
.small { display: flex; align-items: center; justify-content: center; width: 18px; height: 18px; }
.small svg { width: 16px; height: 16px; }
.check { display: flex; align-items: center; gap: 6px; height: 18px; padding-left: 1px; white-space: nowrap; }
.check input { appearance: none; width: 13px; height: 13px; margin: 0; border: 1px solid #8c929b; background: linear-gradient(135deg, #c8ccd2, #f7f8fa); box-shadow: inset 0 0 0 2px #f4f5f7; }
.gsep { width: 1px; margin: 6px 4px 6px 7px; background: #bfc3ca; }
.gsep.near { margin: 6px 3px 6px 2px; }

.toolbar { display: flex; align-items: center; height: 27px; padding-left: 3px; border-top: 2px solid #fff; border-bottom: 2px solid #a9aeb9; background: linear-gradient(#eaedf5, #d2d7e1); }
.grip { width: 2px; height: 12px; margin: 0 2px; background: repeating-linear-gradient(#a6abb6 0 2px, transparent 2px 4px); }
.sep { width: 1px; height: 14px; margin: 0 3px 0 4px; background: #a3a8b3; }
.marked { position: relative; }
.marked::after { content: ""; position: absolute; left: -6px; top: -17px; width: 32px; height: 44px; border: 3px solid #a100ff; z-index: 3; }

.work { display: flex; flex: 1; }
.side { display: flex; flex: none; flex-direction: column; align-items: center; width: 26px; border-right: 2px solid #b1b6c3; background: linear-gradient(90deg, #e9edf6, #ccd2dd); }
.side .tool { height: 21px; }
.side .sep { width: 14px; height: 2px; margin: 3px 0; background: linear-gradient(#a8adb8 50%, #fff 50%); }
.grip.flat { width: 16px; height: 2px; margin: 4px 0 4px; background: repeating-linear-gradient(90deg, #a6abb6 0 2px, transparent 2px 4px); }
.words { overflow: visible; }
.words text { fill: #2e6480; font: 700 7px "Liberation Mono", monospace; }
.side-more { display: flex; align-items: center; justify-content: flex-end; width: 100%; height: 13px; background: #b8bdc7; }
.side-more svg { width: 12px; height: 12px; }

.canvas { position: relative; flex: 1; overflow: hidden; background: #fff; font-family: Lato, "Open Sans", sans-serif; }
.drawing { width: 100%; stroke-width: 2; shape-rendering: crispEdges; }
.blue { stroke: #0000d8; }
.red { stroke: #f00000; }
.nodes { stroke: #7648c8; stroke-width: 1; }
.note, .legend p { margin: 0; font-size: 15px; line-height: 23px; }
.note { position: absolute; left: 364px; top: 1px; color: #111; }
.legend { position: absolute; right: 32px; bottom: 15px; }
.src { color: #000f80; }
.res { color: #f11; }

.panel { position: absolute; left: 358px; top: 26px; width: 119px; border: 2px solid #808080; background: #e6eaf3; font-family: "Open Sans", sans-serif; color: #222; }
.panel-head { display: flex; justify-content: space-between; align-items: center; height: 23px; padding: 0 4px 0 2px; border: 1px solid #dce1ea; border-bottom: 0; background: #b7becb; }
.panel-head svg { width: 9px; height: 9px; }
.panel-body { position: relative; display: flex; padding: 3px 4px 3px 5px; }
.panel select { flex: 1; height: 19px; padding: 0 20px 0 5px; border: 0; appearance: none; background: #fff; font: 11px "Open Sans", sans-serif; color: #111; }
.drop { position: absolute; right: 5px; top: 3px; display: flex; align-items: center; justify-content: center; width: 15px; height: 19px; background: #d7dce8; pointer-events: none; }
```
